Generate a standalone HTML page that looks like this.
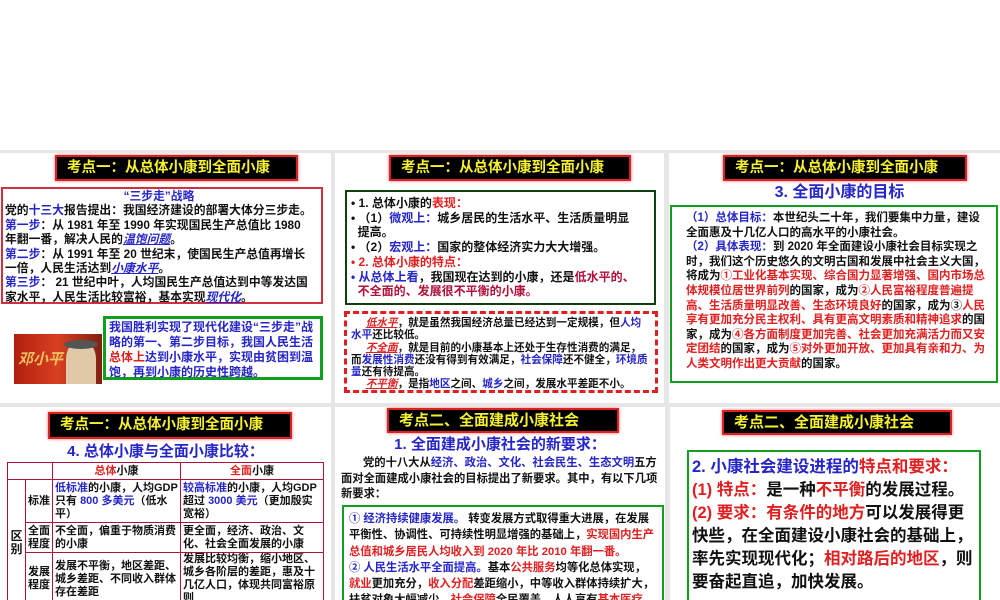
<!DOCTYPE html>
<html><head><meta charset="utf-8"><style>
*{margin:0;padding:0;box-sizing:border-box}
body{width:1000px;height:600px;overflow:hidden;background:#fff;position:relative;font-family:"Liberation Sans","Noto Sans CJK SC",sans-serif;font-weight:bold;color:#111}
.bg{position:absolute;left:0;top:150px;width:1000px;height:450px;background:#e6e6e6}
.p{position:absolute;background:#fff;overflow:hidden}
.a{position:absolute}
.t{position:absolute;background:#000;border:2px solid #e02020;color:#f5f030;font-size:14.5px;line-height:22px;padding-left:10px;white-space:nowrap;box-shadow:0 0 3px #f66}
.b{color:#2626c8}.r{color:#e02020}.dr{color:#b0103a}
.u{text-decoration:underline;font-style:italic}
table{border-collapse:collapse;font-size:11px;line-height:13px;table-layout:fixed}
td{border:1px solid #b0103a;padding:0 2px;vertical-align:middle;overflow:hidden}
</style></head><body>
<div class="bg"></div>

<!-- panel 1 -->
<div class="p" style="left:0;top:153px;width:331px;height:250px">
<div class="t" style="left:55px;top:2px;width:243px;height:26px">考点一：从总体小康到全面小康</div>
<div class="a" style="left:1px;top:34px;width:322px;height:117px;border:2px solid #d03040;font-size:11.8px;line-height:14.4px;padding:0 8px 0 2px">
<div class="b" style="text-align:center">“三步走”战略</div>
党的<span class="b">十三大</span>报告提出：我国经济建设的部署大体分三步走。<br>
<span class="b">第一步</span>：从 1981 年至 1990 年实现国民生产总值比 1980 年翻一番，解决人民的<span class="b u">温饱问题</span>。<br>
<span class="b">第二步</span>：从 1991 年至 20 世纪末，使国民生产总值再增长一倍，人民生活达到<span class="b u">小康水平</span>。<br>
<span class="b">第三步</span>： 21 世纪中叶，人均国民生产总值达到中等发达国家水平，人民生活比较富裕，基本实现<span class="b u">现代化</span>。
</div>
<div class="a" style="left:14px;top:181px;width:88px;height:50px;background:linear-gradient(90deg,#b02010,#d84020 50%,#802010)">
<div class="a" style="left:4px;top:14px;color:#f0c060;font-size:15px;font-style:italic">邓小平</div>
<div class="a" style="left:52px;top:8px;width:30px;height:42px;background:#e0c8a8;border-radius:40% 40% 0 0"></div>
<div class="a" style="left:50px;top:6px;width:34px;height:9px;background:#555;border-radius:50%"></div>
</div>
<div class="a" style="left:103px;top:163px;width:220px;height:64px;border:3px solid #10a020;font-size:12px;line-height:15px;padding:1px 3px;color:#2626c8">我国胜利实现了现代化建设“三步走”战略的第一、第二步目标，我国人民生活<span class="r">总体上</span>达到小康水平，实现由贫困到温饱，再到小康的历史性跨越。</div>
</div>

<!-- panel 2 -->
<div class="p" style="left:335px;top:153px;width:329px;height:250px">
<div class="t" style="left:54px;top:2px;width:242px;height:26px">考点一：从总体小康到全面小康</div>
<div class="a" style="left:10px;top:37px;width:311px;height:115px;border:2px solid #104010;font-size:12px;line-height:14.7px;padding:4px 4px">
• 1. 总体小康的<span class="r">表现：</span><br>
• （1）<span class="b">微观上：</span>城乡居民的生活水平、生活质量明显<br>&nbsp;&nbsp;提高。<br>
• （2）<span class="b">宏观上：</span>国家的整体经济实力大大增强。<br>
<span class="r">• 2. 总体小康的特点：</span><br>
<span class="b">• 从总体上看</span>，我国现在达到的小康，还是<span class="dr">低水平的、<br>&nbsp;&nbsp;不全面的、发展很不平衡的小康。</span>
</div>
<div class="a" style="left:9px;top:158px;width:314px;height:82px;border:3px dashed #e02020;font-size:10.6px;line-height:12.3px;padding:3px 4px">
&nbsp;&nbsp;&nbsp;&nbsp;&nbsp;<span class="r u">低水平</span>，就是虽然我国经济总量已经达到一定规模，但<span class="b">人均水平</span>还比较低。<br>
&nbsp;&nbsp;&nbsp;&nbsp;&nbsp;<span class="r u">不全面</span>，就是目前的小康基本上还处于生存性消费的满足，而<span class="b">发展性消费</span>还没有得到有效满足，<span class="b">社会保障</span>还不健全，<span class="b">环境质量</span>还有待提高。<br>
&nbsp;&nbsp;&nbsp;&nbsp;&nbsp;<span class="r u">不平衡</span>，是指<span class="b">地区</span>之间、<span class="b">城乡</span>之间，发展水平差距不小。
</div>
</div>

<!-- panel 3 -->
<div class="p" style="left:669px;top:153px;width:331px;height:250px">
<div class="t" style="left:54px;top:2px;width:244px;height:26px">考点一：从总体小康到全面小康</div>
<div class="a b" style="left:0;width:331px;top:30px;text-align:center;font-size:16px;line-height:20px;padding-left:10px">3. 全面小康的目标</div>
<div class="a" style="left:1px;top:52px;width:328px;height:178px;border:2px solid #10a020;font-size:11.5px;line-height:14.6px;padding:4px 10px 0 14px">
<span class="b">（1）总体目标：</span>本世纪头二十年，我们要集中力量，建设全面惠及十几亿人口的高水平的小康社会。<br>
<span class="b">（2）具体表现：</span>到 2020 年全面建设小康社会目标实现之时，我们这个历史悠久的文明古国和发展中社会主义大国，将成为<span class="r">①工业化基本实现、综合国力显著增强、国内市场总体规模位居世界前列</span>的国家，成为<span class="r">②人民富裕程度普遍提高、生活质量明显改善、生态环境良好</span>的国家，成为③<span class="r">人民享有更加充分民主权利、具有更高文明素质和精神追求</span>的国家，成为<span class="r">④各方面制度更加完善、社会更加充满活力而又安定团结</span>的国家，成为<span class="r">⑤对外更加开放、更加具有亲和力、为人类文明作出更大贡献</span>的国家。
</div>
</div>

<!-- panel 4 -->
<div class="p" style="left:0;top:407px;width:331px;height:193px">
<div class="t" style="left:48px;top:5px;width:244px;height:27px;line-height:23px">考点一：从总体小康到全面小康</div>
<div class="a b" style="left:0;width:331px;top:36px;text-align:center;font-size:15px;line-height:18px">4. 总体小康与全面小康比较：</div>
<table class="a" style="left:7px;top:55px;width:316px;font-weight:bold">
<colgroup><col style="width:18px"><col style="width:27px"><col style="width:128px"><col style="width:143px"></colgroup>
<tr style="height:17px"><td colspan="2"></td><td style="text-align:center"><span class="r">总体</span>小康</td><td style="text-align:center"><span class="r">全面</span>小康</td></tr>
<tr style="height:43px"><td rowspan="3" style="text-align:center;font-size:12px;padding:0">区<br>别</td><td style="text-align:center;padding:0">标准</td><td><span class="b">低标准</span>的小康，人均GDP 只有 <span class="b">800 多美元</span>（低水平）</td><td><span class="b">较高标准</span>的小康，人均GDP 超过 <span class="b">3000 美元</span>（更加殷实宽裕）</td></tr>
<tr style="height:30px"><td style="text-align:center;padding:0">全面<br>程度</td><td>不全面，偏重于物质消费的小康</td><td>更全面，经济、政治、文化、社会全面发展的小康</td></tr>
<tr style="height:42px"><td style="text-align:center;padding:0">发展<br>程度</td><td>发展不平衡，地区差距、城乡差距、不同收入群体存在差距</td><td>发展比较均衡，缩小地区、城乡各阶层的差距，惠及十几亿人口，体现共同富裕原则</td></tr>
<tr style="height:20px"><td colspan="2"></td><td colspan="2" class="b">② 都是小康社会，都是我国社会主义现代化建设的目标</td></tr>
</table>
</div>

<!-- panel 5 -->
<div class="p" style="left:335px;top:407px;width:330px;height:193px">
<div class="t" style="left:52px;top:1px;width:232px;height:25px;line-height:21px;font-size:15px">考点二、全面建成小康社会</div>
<div class="a b" style="left:0;width:330px;top:29px;text-align:center;font-size:15px;line-height:18px">1. 全面建成小康社会的新要求：</div>
<div class="a" style="left:6px;top:49px;width:322px;font-size:11.3px;line-height:15.5px">&nbsp;&nbsp;&nbsp;&nbsp;&nbsp;&nbsp;&nbsp;党的十八大从<span class="b">经济、政治、文化、社会民生、生态文明</span>五方面对全面建成小康社会的目标提出了新要求。其中，有以下几项新要求：</div>
<div class="a" style="left:7px;top:98px;width:322px;height:100px;border:2px solid #10a020;font-size:11.3px;line-height:16.3px;padding:4px 5px">
<span class="b">① 经济持续健康发展。</span> 转变发展方式取得重大进展，在发展平衡性、协调性、可持续性明显增强的基础上，<span class="r">实现国内生产总值和城乡居民人均收入到 2020 年比 2010 年翻一番。</span><br>
<span class="b">② 人民生活水平全面提高。</span>基本<span class="r">公共服务</span>均等化总体实现，<span class="r">就业</span>更加充分，<span class="r">收入分配</span>差距缩小，中等收入群体持续扩大，扶贫对象大幅减少，<span class="r">社会保障</span>全民覆盖，人人享有<span class="r">基本医疗</span>
</div>
</div>

<!-- panel 6 -->
<div class="p" style="left:670px;top:407px;width:330px;height:193px">
<div class="t" style="left:52px;top:3px;width:230px;height:25px;line-height:21px;font-size:15px">考点二、全面建成小康社会</div>
<div class="a" style="left:17px;top:43px;width:294px;height:160px;border:2px solid #10a020;font-size:16.5px;line-height:23px;padding:4px 3px">
<span class="b">2. 小康社会建设进程的</span><span class="r">特点和要求：</span><br>
<span class="r">(1) 特点：</span>是一种<span class="r">不平衡</span>的发展过程。<br>
<span class="r">(2) 要求：有条件的地方</span>可以发展得更快些，在全面建设小康社会的基础上，率先实现现代化；<span class="r">相对路后的地区</span>，则要奋起直追，加快发展。
</div>
</div>
</body></html>
